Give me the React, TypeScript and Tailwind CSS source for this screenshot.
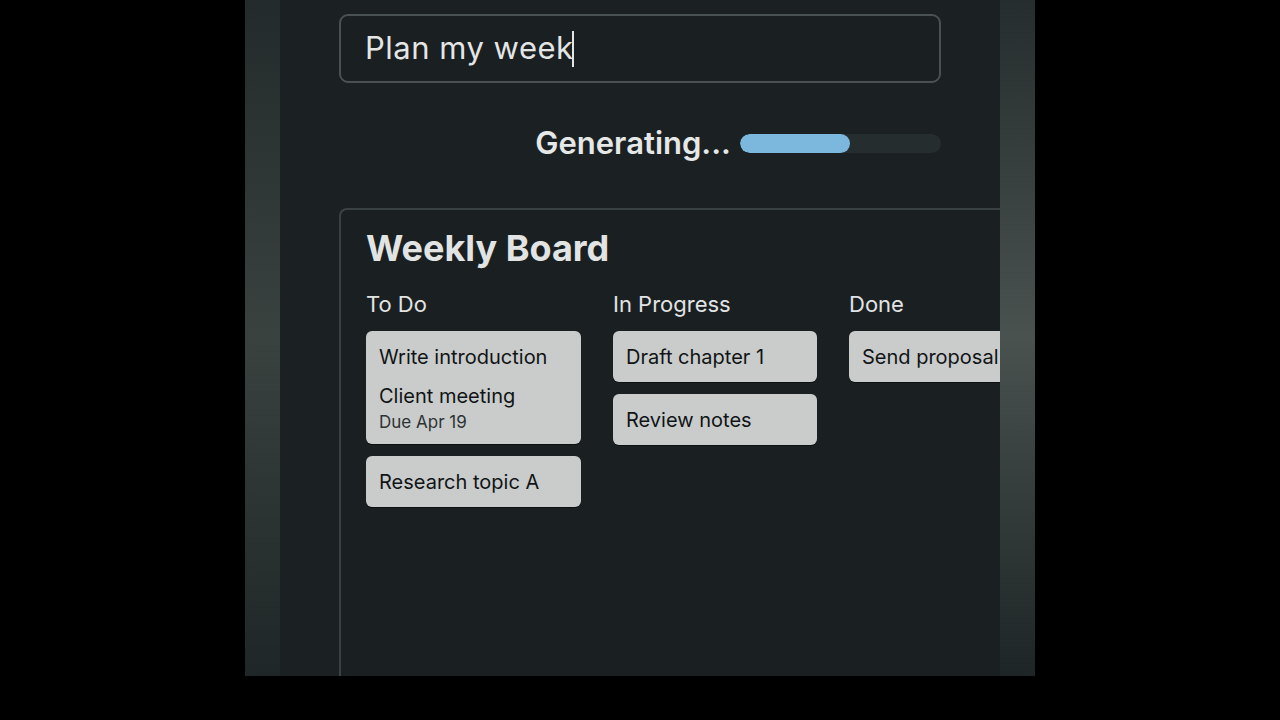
import React from 'react';

const columns = [
  {
    title: 'To Do',
    width: 'w-[215px]',
    cards: [
      { lines: ['Write introduction', 'Client meeting'], due: 'Due Apr 19' },
      { lines: ['Research topic A'] },
    ],
  },
  {
    title: 'In Progress',
    width: 'w-[204px]',
    cards: [{ lines: ['Draft chapter 1'] }, { lines: ['Review notes'] }],
  },
  {
    title: 'Done',
    width: 'w-[204px]',
    cards: [{ lines: ['Send proposal'] }],
  },
];

type Card = { lines: string[]; due?: string };

const TaskCard: React.FC<{ card: Card }> = ({ card }) => (
  <div className="bg-[#c9cccb] rounded-[6px] px-[13px] pt-[13px] pb-[12px] text-[#111416] shadow-[0_1px_0_rgba(0,0,0,0.5)]">
    {card.lines.map((l, i) => (
      <p key={l} className={`text-[20px] leading-[26px] whitespace-nowrap ${i > 0 ? 'mt-[13px]' : ''}`}>{l}</p>
    ))}
    {card.due && <p className="text-[17px] leading-[20px] text-[#2e3234] mt-[3px]">{card.due}</p>}
  </div>
);

export default function App() {
  return (
    <div className="w-[1280px] h-[720px] bg-black flex justify-center" style={{ fontFamily: 'Inter, "Noto Sans", sans-serif' }}>
      <div className="w-[790px] h-[676px] flex">
        <div className="w-[35px] h-full bg-gradient-to-b from-[#232a2b] via-[#3a4240] to-[#1f2627]" />
        <div className="w-[720px] h-full bg-[#1b2123] overflow-hidden pl-[59px] pt-[14px]">
          <div className="w-[602px] h-[69px] rounded-[9px] border-2 border-[#4a5153] bg-[#1a1f21] flex items-center pl-[24px]">
            <span className="text-[31px] text-[#e4e6e6] tracking-[0.5px]">Plan my week</span>
            <span className="w-[2px] h-[36px] bg-[#e4e6e6] -ml-[2px]" />
          </div>
          <div className="w-[602px] h-[36px] flex items-center justify-end gap-[9px] mt-[42px]">
            <span className="text-[31px] leading-[36px] font-semibold text-[#e6e8e8]">Generating...</span>
            <div className="w-[201px] h-[19px] rounded-full bg-[#262d2f] overflow-hidden">
              <div className="w-[110px] h-full rounded-full bg-[#7cb8dd]" />
            </div>
          </div>
          <div className="w-[720px] h-[500px] mt-[47px] rounded-tl-[8px] border-t-2 border-l-2 border-[#394143] bg-[#1a2022] pl-[25px] pt-[14px]">
            <h1 className="text-[36px] font-bold text-[#e2e4e4] leading-[48px]">Weekly Board</h1>
            <div className="flex gap-[32px] mt-[19px]">
              {columns.map(col => (
                <div key={col.title} className={`${col.width} shrink-0`}>
                  <h2 className="text-[22px] text-[#e2e4e4] leading-[26px]">{col.title}</h2>
                  <div className="flex flex-col gap-[12px] mt-[14px]">
                    {col.cards.map((c, i) => <TaskCard key={i} card={c} />)}
                  </div>
                </div>
              ))}
            </div>
          </div>
        </div>
        <div className="w-[35px] h-full bg-gradient-to-b from-[#262d2e] via-[#4a5250] to-[#1e2526]" />
      </div>
    </div>
  );
}
